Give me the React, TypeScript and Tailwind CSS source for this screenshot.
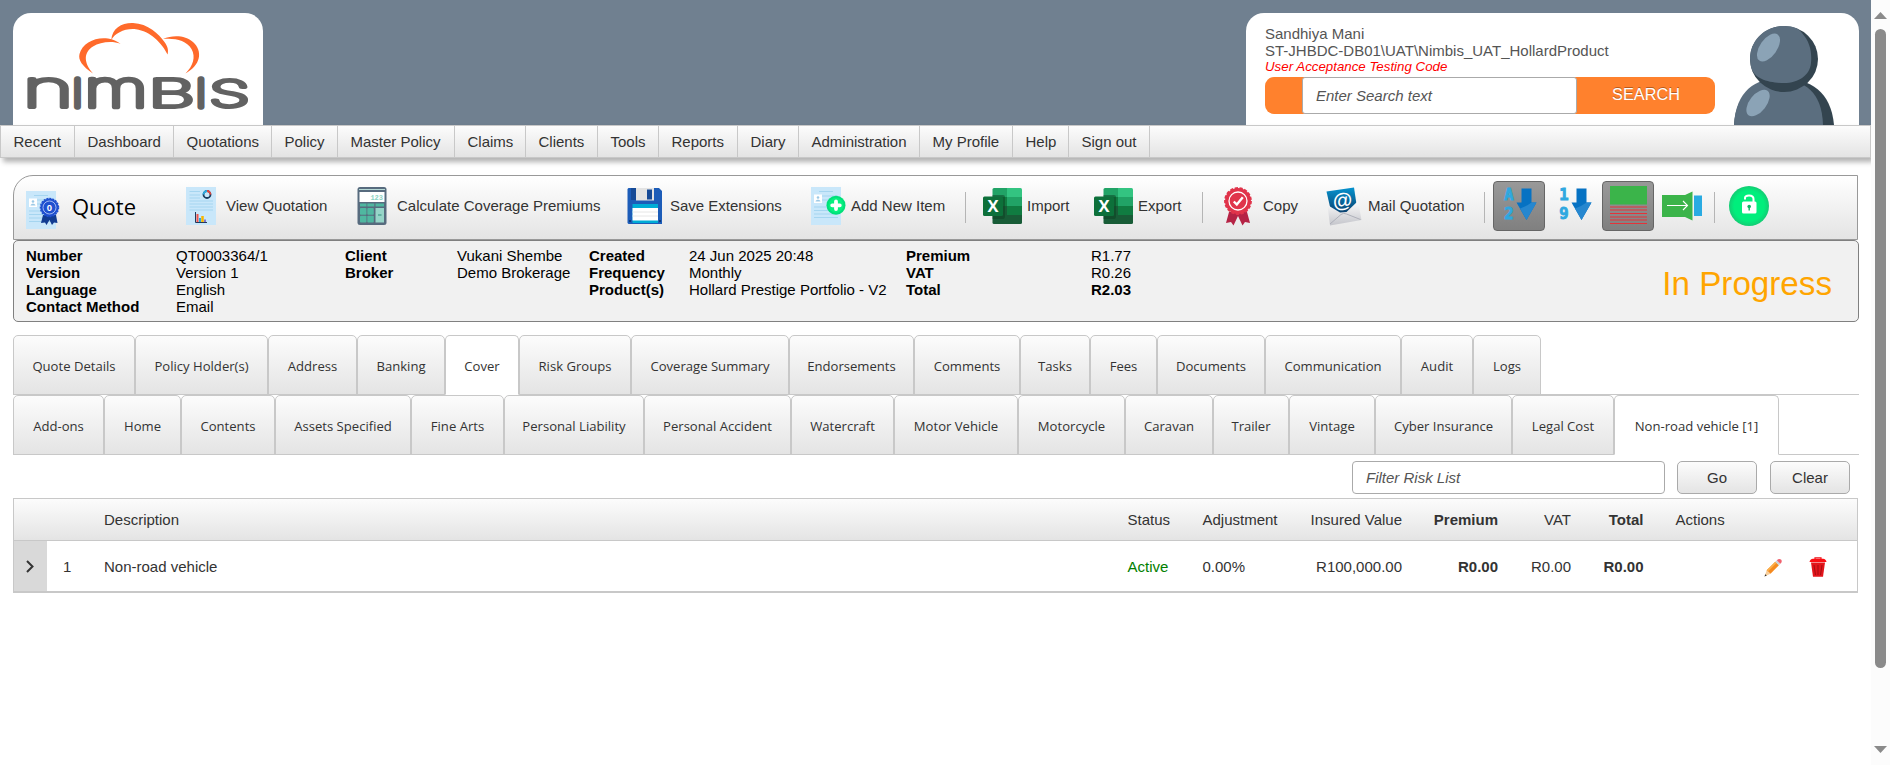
import React from "react";

const bar = "bg-gradient-to-b from-[#fcfcfc] to-[#e4e4e4]";

const wordmark = [
  { char: "n", x: 48, sx: 1.72, size: 51 },
  { char: "I", x: 77.5, sx: 1.1, size: 38 },
  { char: "m", x: 116, sx: 1.44, size: 51 },
  { char: "B", x: 171.5, sx: 1.92, size: 38 },
  { char: "I", x: 201, sx: 1.1, size: 38 },
  { char: "S", x: 229.500, sx: 1.78, size: 37 },
];

function Logo() {
  return (
    <svg width="250" height="112" viewBox="13 13 250 112" role="img" aria-label="NIMBIS">
      <g fill="#ff6a2b">
        <path d="M93 73.500C82 66 78 60 79.500 54C82 43 96 36.500 108 38.500C113 39.500 117 41 120.500 43.800C112 40.500 100 42 93 46.500C84 52 83 62 93 73.500Z" />
        <path d="M111.300 40C112 28 122 22.500 133 22.900C148 23.500 159 34 164.500 42C168 47 168.500 50 167.600 54.500C162 43 150 31 136 29.200C125 28 115 33 111.300 40Z" />
        <path d="M163 39C173 34.500 186 35.500 193 42C203 51 201 65 185.500 73.500C193 66 196 57 191.500 49C186 40 175 38 163 39Z" />
      </g>
      <g fill="#626262" stroke="#626262" strokeWidth="5.800" strokeLinejoin="round" fontFamily="Inter" fontWeight="100" textAnchor="middle">
        {wordmark.map(({ char, x, sx, size }) => (
          <text key={x} transform={`translate(${x} 107) scale(${sx} 1)`} fontSize={size} vectorEffect="non-scaling-stroke">
            {char}
          </text>
        ))}
      </g>
    </svg>
  );
}

function Avatar() {
  return (
    <svg width="100" height="100" viewBox="0 0 100 100">
      <path d="M0 100C2 66 24 54 50 54S97 66 100 100Z" fill="#33444f" />
      <path d="M0 100C2 62 26 52 48 54S88 66 89 100Z" fill="#5b6e7f" />
      <ellipse cx="50" cy="34" rx="34" ry="33" fill="#33444f" />
      <path d="M16 34C16 16 30 1 50 1C61 1 65 4 68 8C76 17 78 27 77 38C76 50 65 58 50 58C35 58 20 54 17 42Z" fill="#5b6e7f" />
      <ellipse cx="34.500" cy="22.500" rx="8.500" ry="16" transform="rotate(35 34.500 22.500)" fill="#8ba3b6" />
      <ellipse cx="24" cy="78" rx="8.500" ry="15.500" transform="rotate(38 24 78)" fill="#8ba3b6" />
    </svg>
  );
}

function Sheet() {
  return (
    <g>
      <rect width="30" height="38" fill="#c9e7fa" />
      <path d="M8 4.500H22M11 9H27M11 13H27M3 20H27M3 23.500H27M3 27H27M3 30.500H27" stroke="#a5d5f0" strokeWidth="1" />
      <rect x="3" y="7.500" width="8" height="8.500" fill="#fff" />
      <circle cx="7" cy="10.500" r="1.300" fill="#9cc9e6" />
      <path d="M4.500 14.500C4.800 12 9.200 12 9.500 14.500Z" fill="#9cc9e6" />
    </g>
  );
}

function QuoteIcon() {
  return (
    <svg width="34" height="38" viewBox="0 0 34 38">
      <Sheet />
      <path d="M17 24L15 32L19 31.500L20.500 34L23.500 29L26 34L28 31.500L31.500 32L30 24Z" fill="#123c92" />
      <circle cx="23.500" cy="16.500" r="9" fill="#1f50cf" stroke="#1f50cf" strokeWidth="1.500" strokeDasharray="2 1" />
      <circle cx="23.500" cy="16.500" r="6.500" fill="none" stroke="#d8e4ff" strokeWidth="0.700" />
      <text x="23.500" y="20" textAnchor="middle" fontSize="9.500" fontWeight="bold" fill="#fff" fontFamily="Liberation Sans">0</text>
    </svg>
  );
}

function ReportIcon() {
  return (
    <svg width="30" height="38" viewBox="0 0 30 38">
      <rect width="30" height="38" fill="#c9e7fa" />
      <path d="M3.500 4.500H14M3.500 8H14M3.500 11H14M3.500 14H27M3.500 17H27M3.500 20H27M3.500 23H27" stroke="#a5d5f0" strokeWidth="1.200" />
      <circle cx="21" cy="7.500" r="3.500" fill="none" stroke="#1b3a5b" strokeWidth="1.800" />
      <path d="M17.500 7.500A3.500 3.500 0 0 1 21 4" fill="none" stroke="#29abe2" strokeWidth="1.800" />
      <path d="M21 4A3.500 3.500 0 0 1 24.500 7.500" fill="none" stroke="#e8453c" strokeWidth="1.800" />
      <path d="M9.500 25V35.500H21" fill="none" stroke="#23395b" strokeWidth="1" />
      <path d="M11.500 27V35" stroke="#f0534a" strokeWidth="2" />
      <path d="M14 31V35" stroke="#29abe2" strokeWidth="2" />
      <path d="M16.500 29V35" stroke="#f7b500" strokeWidth="2.500" />
      <path d="M19 32.500V35" stroke="#6b4fbb" strokeWidth="1.500" />
    </svg>
  );
}

function CalculatorIcon() {
  const keys = [[3, 21], [10.3, 21], [3, 28.700], [10.3, 28.700]];
  return (
    <svg width="30" height="38" viewBox="0 0 30 38">
      <rect x="0.500" width="29" height="38" rx="2.500" fill="#576b7e" />
      <rect x="2" y="2" width="26" height="1" fill="#b7d9d6" />
      <rect x="2.500" y="5" width="25" height="10" fill="#fff" />
      <text x="26" y="13.300" textAnchor="end" fontSize="7" fontWeight="bold" fill="#8ad3c2" fontFamily="Liberation Mono">123</text>
      <path d="M3 16.500h6.500v3H3zM10.300 16.500h7v3h-7zM18.500 16.500h8.500v3h-8.500z" fill="#4fb7a0" />
      {keys.map(([x, y]) => (
        <rect key={`${x}-${y}`} x={x} y={y} width="6.500" height="6.800" rx="0.800" fill="#4fb7a0" />
      ))}
      <rect x="18.500" y="21" width="8.500" height="14.500" fill="#96d5c8" />
      <path d="M21 28H24.500" stroke="#4fa795" strokeWidth="1.500" />
    </svg>
  );
}

function FloppyIcon() {
  return (
    <svg width="36" height="36" viewBox="0 0 36 36">
      <path d="M1.500 0H32L35 3V36H1.500L0.500 35V1Z" fill="#1c5cb8" />
      <path d="M4 0H9V12H4z" fill="#164a96" />
      <path d="M9 0H27V12.500H9z" fill="#e3e3e3" />
      <path d="M20 1.500H25V11.500H20z" fill="#164a96" />
      <path d="M5.500 16H31V35H5.500z" fill="#00acd6" />
      <path d="M5.500 20H31V32.500H5.500z" fill="#fff" />
      <path d="M5.500 24H31M5.500 28H31" stroke="#e6e6e6" />
      <path d="M2 32h2v2H2zM32 32h2v2h-2z" fill="#0c3a7c" />
    </svg>
  );
}

function AddItemIcon() {
  return (
    <svg width="35" height="38" viewBox="0 0 35 38">
      <Sheet />
      <circle cx="25" cy="18.300" r="9.500" fill="#00e07a" />
      <circle cx="25" cy="18.300" r="7.500" fill="#06f07f" />
      <path d="M25 14.500V22.100M21.200 18.300H28.800" stroke="#fff" strokeWidth="3.800" strokeLinecap="round" />
    </svg>
  );
}

function ExcelIcon() {
  return (
    <svg width="39" height="36" viewBox="0 0 39 36">
      <path d="M11 0H24V9H9.500V1.500Q9.500 0 11 0Z" fill="#21a366" />
      <path d="M24 0H37.500Q39 0 39 1.500V9H24Z" fill="#33c481" />
      <path d="M9.500 9H24V18H9.500Z" fill="#107c41" />
      <path d="M24 9H39V18H24Z" fill="#21a366" />
      <path d="M9.500 18H24V27H9.500Z" fill="#185c37" />
      <path d="M24 18H39V27H24Z" fill="#107c41" />
      <path d="M9.500 27H39V34.500Q39 36 37.500 36H11Q9.500 36 9.500 34.500Z" fill="#185c37" />
      <path d="M9.500 7H20Q22 7 22 9V28Q22 31 20 31H9.500Z" fill="#0b3f22" opacity="0.500" />
      <rect y="8.500" width="20" height="19.500" rx="1.500" fill="#0d703a" />
      <text x="10" y="24.300" textAnchor="middle" fontSize="16.500" fontWeight="bold" fill="#fff" fontFamily="Open Sans">X</text>
    </svg>
  );
}

function RibbonIcon() {
  return (
    <svg width="28" height="39" viewBox="0 0 28 39">
      <path d="M5 25L2 36L7 35L9.500 38.500L14 29L18.500 38.500L21 35L26 36L23 25Z" fill="#b52345" />
      <circle cx="14" cy="14" r="13" fill="#e0344b" stroke="#e0344b" strokeWidth="1.800" strokeDasharray="3.200 1.600" />
      <circle cx="14" cy="14" r="9" fill="none" stroke="#fff" strokeWidth="1.300" />
      <path d="M9.800 14.500L12.800 17.500L18.800 10.300" fill="none" stroke="#fff" strokeWidth="2.400" />
    </svg>
  );
}

function MailIcon() {
  return (
    <svg width="36" height="39" viewBox="0 0 36 39">
      <defs>
        <linearGradient id="mailBlue" x1="0" y1="0" x2="0" y2="1">
          <stop offset="0" stopColor="#0593cf" />
          <stop offset="1" stopColor="#0c3763" />
        </linearGradient>
        <linearGradient id="mailPaper" x1="0" y1="0" x2="0" y2="1">
          <stop offset="0" stopColor="#fdfdfd" />
          <stop offset="1" stopColor="#c4c5cb" />
        </linearGradient>
      </defs>
      <path d="M0.500 4.500L28 0.500L31.500 24L18 29L4.500 22Z" fill="url(#mailBlue)" />
      <path d="M1.500 18L14 25.500L20.500 25L32 14L35.500 33L4 38.500Z" fill="url(#mailPaper)" />
      <text x="16.500" y="20" textAnchor="middle" fontSize="20" fontWeight="bold" fill="#fff" fontFamily="Liberation Sans" transform="rotate(-6 16.500 14)">@</text>
      <path d="M4 37L15 27.500Q17.500 25.500 20.500 27L34.500 32.500" fill="none" stroke="#a9abb5" strokeWidth="0.900" />
    </svg>
  );
}

function SortIcon({ top, bottom }: { top: string; bottom: string }) {
  return (
    <svg className="overflow-visible" width="33" height="34" viewBox="0 0 33 34">
      <g fill="#2fa8e0" stroke="#2fa8e0" strokeWidth="0.900" fontFamily="DejaVu Sans Mono" fontWeight="bold" fontSize="15.500" textAnchor="middle">
        <text x="5" y="13">{top}</text>
        <text x="5" y="32">{bottom}</text>
      </g>
      <path d="M17.500 1.500H27.500V15.500H32.500L22.500 33L12.500 15.500H17.500Z" fill="#0672c3" />
      <path d="M27.500 15.500H32.500L22.500 33L16 21.500Q23 19 27.500 15.500Z" fill="#2687cf" />
    </svg>
  );
}

function RowsIcon() {
  return (
    <svg width="37" height="39" viewBox="0 0 37 39">
      <rect y="0" width="37" height="18.500" fill="#3bb44a" />
      <path d="M0 21H37M0 24H37M0 27.500H37M0 31H37M0 34H37M0 37.500H37" stroke="#e63238" strokeWidth="1.100" />
    </svg>
  );
}

function ExpandIcon() {
  return (
    <svg width="40" height="30" viewBox="0 0 40 30">
      <path d="M0 4H23L30.500 0.500V29.500L23 26H0Z" fill="#3bb44a" />
      <rect x="32" y="4.500" width="8" height="20.500" fill="#29abe2" />
      <path d="M5 14.500H25M21 10L25.500 14.500L21 19" fill="none" stroke="#fff" strokeWidth="1.100" />
    </svg>
  );
}

function LockIcon() {
  return (
    <svg width="40" height="40" viewBox="0 0 40 40">
      <defs>
        <radialGradient id="lockGreen">
          <stop offset="0.750" stopColor="#00ee7c" />
          <stop offset="1" stopColor="#14cc74" />
        </radialGradient>
      </defs>
      <circle cx="20" cy="20" r="20" fill="url(#lockGreen)" />
      <rect x="13" y="15.500" width="14.500" height="12" rx="1.500" fill="#fff" />
      <path d="M16 13.500V12Q16 9.500 20 9.500Q24.500 9.500 24.500 13V16" fill="none" stroke="#fff" strokeWidth="2" />
      <circle cx="20.200" cy="20.500" r="1.800" fill="#0bb565" />
      <path d="M20.200 21V24.500" stroke="#0bb565" strokeWidth="1.400" />
    </svg>
  );
}

function PencilIcon() {
  return (
    <svg width="19" height="19" viewBox="0 0 19 19">
      <path d="M0.500 18.500L2.700 12.200L6.500 15.800Z" fill="#f7cf9c" />
      <path d="M0.500 18.500L1.300 16.300L2.800 17.600Z" fill="#333" />
      <path d="M2.700 12.200L11.300 3.700L14.900 7.300L6.500 15.800Z" fill="#f58a1f" />
      <path d="M2.700 12.200L11.300 3.700L12.500 5L4 13.500Z" fill="#fbb04c" />
      <path d="M11.300 3.700L12.800 2.200L16.400 5.800L14.900 7.300Z" fill="#c9d3da" />
      <path d="M12.800 2.200Q15 0.200 17 1.500Q18.800 3.500 16.400 5.800Z" fill="#f0616d" />
    </svg>
  );
}

function TrashIcon() {
  return (
    <svg width="18" height="20" viewBox="0 0 18 20">
      <path d="M6 2V0.800H12V2" fill="none" stroke="#f01218" strokeWidth="1.200" />
      <path d="M0.500 5Q1 2 4 1.800H14Q17 2 17.500 5Z" fill="#fb0d12" />
      <path d="M2 5.500H16L14 19.800H4Z" fill="#e3151b" />
      <path d="M5 8L6.500 18M9 8V18M13 8L11.500 18" stroke="#a50d12" strokeWidth="1" />
    </svg>
  );
}

const menu = [
  ["Recent", "w-[74px]"], ["Dashboard", "w-[99px]"], ["Quotations", "w-[98px]"], ["Policy", "w-[66px]"],
  ["Master Policy", "w-[117px]"], ["Claims", "w-[71px]"], ["Clients", "w-[72px]"], ["Tools", "w-[61px]"],
  ["Reports", "w-[79px]"], ["Diary", "w-[61px]"], ["Administration", "w-[121px]"], ["My Profile", "w-[93px]"],
  ["Help", "w-[56px]"], ["Sign out", "w-[81px]"],
];

const mainTabs = [
  ["Quote Details", "w-[122px]"], ["Policy Holder(s)", "w-[133px]"], ["Address", "w-[89px]"],
  ["Banking", "w-[88px]"], ["Cover", "w-[74px]"], ["Risk Groups", "w-[112px]"],
  ["Coverage Summary", "w-[158px]"], ["Endorsements", "w-[125px]"], ["Comments", "w-[106px]"],
  ["Tasks", "w-[70px]"], ["Fees", "w-[67px]"], ["Documents", "w-[108px]"],
  ["Communication", "w-[136px]"], ["Audit", "w-[72px]"], ["Logs", "w-[68px]"],
];

const coverTabs = [
  ["Add-ons", "w-[91px]"], ["Home", "w-[77px]"], ["Contents", "w-[94px]"], ["Assets Specified", "w-[136px]"],
  ["Fine Arts", "w-[93px]"], ["Personal Liability", "w-[140px]"], ["Personal Accident", "w-[147px]"],
  ["Watercraft", "w-[103px]"], ["Motor Vehicle", "w-[124px]"], ["Motorcycle", "w-[107px]"],
  ["Caravan", "w-[88px]"], ["Trailer", "w-[76px]"], ["Vintage", "w-[86px]"],
  ["Cyber Insurance", "w-[137px]"], ["Legal Cost", "w-[102px]"], ["Non-road vehicle [1]", "w-[165px]"],
];

function Tabs({ tabs, active }: { tabs: string[][]; active: string }) {
  return (
    <div className="flex h-[60px] w-[1846px] bg-[linear-gradient(#c8c8c8,#c8c8c8)] bg-[length:100%_1px] bg-bottom bg-no-repeat">
      {tabs.map(([name, width]) => (
        <button
          key={name}
          className={`${width} shrink-0 whitespace-nowrap rounded-t-[5px] border border-[#c8c8c8] pt-0.5 font-['Open_Sans',sans-serif] text-[13.100px] text-[#333] ${
            name === active ? "border-b-white bg-white" : bar
          }`}
        >
          {name}
        </button>
      ))}
    </div>
  );
}

const Divider = ({ className }: { className: string }) => (
  <span className={`${className} mt-0.5 h-[31px] w-px shrink-0 bg-[#b5b5b5]`} />
);

function Tool({ className, label, labelClass, children }: { className: string; label: string; labelClass: string; children: React.ReactNode }) {
  return (
    <button className={`${className} flex shrink-0 items-center whitespace-nowrap text-left`}>
      {children}
      <span className={`${labelClass} pb-0.5`}>{label}</span>
    </button>
  );
}

const cols = "grid grid-cols-[33px_57px_1023.500px_75px_88px_111.500px_96px_73px_72.500px_1fr] items-center";

export default function App() {
  return (
    <div className="flex h-[765px] w-[1890px] overflow-hidden bg-white font-['Liberation_Sans',Arial,sans-serif] text-[15px] leading-[17px] text-[#333]">
      <div className="flex w-[1871px] shrink-0 flex-col">
        <header className="flex h-[125px] justify-between bg-[#708090] pl-[13px] pr-3 pt-[13px]">
          <div className="w-[250px] overflow-hidden rounded-t-[18px] bg-white"><Logo /></div>
          <div className="flex w-[613px] justify-between rounded-t-[18px] bg-white pl-[19px] pr-[25px] pt-3 text-[#555]">
            <div className="flex w-[450px] flex-col">
              <div>Sandhiya Mani</div>
              <div>ST-JHBDC-DB01\UAT\Nimbis_UAT_HollardProduct</div>
              <div className="text-[13.300px] italic leading-[15px] text-[#f00]">User Acceptance Testing Code</div>
              <div className="mt-[3px] flex h-[37px] overflow-hidden rounded-[9px] bg-[#ff812d]">
                <input
                  className="ml-[37px] w-[275px] rounded-[3px] border border-[#aaa] bg-white px-[13px] italic placeholder:text-[#555]"
                  placeholder="Enter Search text"
                />
                <button className="flex-1 pb-[3px] text-[16.300px] text-white [text-shadow:0_-1px_0_rgba(0,0,0,0.3)]">SEARCH</button>
              </div>
            </div>
            <Avatar />
          </div>
        </header>

        <nav className={`flex h-[33px] shrink-0 border border-[#c8c8c8] shadow-[3px_4px_5px_rgba(0,0,0,0.3)] ${bar}`}>
          {menu.map(([name, width]) => (
            <a key={name} className={`${width} shrink-0 whitespace-nowrap border-r border-[#c8c8c8] pl-[12.500px] leading-[31px]`}>
              {name}
            </a>
          ))}
        </nav>

        <main className="pl-[13px] pt-[17px]">
          <div className="flex h-[65px] w-[1845px] items-center rounded-tl-[20px] border border-[#999] bg-gradient-to-b from-white to-[#e4e4e4] pb-[3px]">
            <span className="ml-3 mt-2"><QuoteIcon /></span>
            <span className="ml-3 w-[66px] font-['Open_Sans',sans-serif] text-[22px] text-black">Quote</span>
            <Tool className="ml-[48px]" label="View Quotation" labelClass="ml-2.5 w-[102px]"><ReportIcon /></Tool>
            <Tool className="ml-[29px]" label="Calculate Coverage Premiums" labelClass="ml-[10px] w-[203px]"><CalculatorIcon /></Tool>
            <Tool className="ml-[27px]" label="Save Extensions" labelClass="ml-[7px] w-[112px]"><FloppyIcon /></Tool>
            <Tool className="ml-[29px]" label="Add New Item" labelClass="ml-[5px] w-[95px]"><AddItemIcon /></Tool>
            <Divider className="ml-[19px]" />
            <Tool className="ml-[17px]" label="Import" labelClass="ml-[5px] w-[44px]"><ExcelIcon /></Tool>
            <Tool className="ml-[23px]" label="Export" labelClass="ml-[5px] w-[44px]"><ExcelIcon /></Tool>
            <Divider className="ml-[20px]" />
            <Tool className="ml-[21px]" label="Copy" labelClass="ml-[11px] w-[36px]"><RibbonIcon /></Tool>
            <Tool className="ml-[27px]" label="Mail Quotation" labelClass="ml-1.5 w-[99px]"><MailIcon /></Tool>
            <Divider className="ml-[17px]" />
            <button className="ml-[8px] flex h-[50px] w-[52px] shrink-0 items-center justify-center rounded-[4px] border border-[#666] bg-gradient-to-b from-[#999] to-[#808080] pb-1 pl-0.5">
              <SortIcon top="A" bottom="2" />
            </button>
            <button className="ml-[12px] flex h-[50px] w-[36px] shrink-0 items-center justify-center pb-1">
              <SortIcon top="1" bottom="9" />
            </button>
            <button className="ml-[9px] flex h-[50px] w-[52px] shrink-0 items-center justify-center rounded-[4px] border border-[#666] bg-gradient-to-b from-[#999] to-[#808080] pb-0.5">
              <RowsIcon />
            </button>
            <button className="ml-[8px] shrink-0"><ExpandIcon /></button>
            <Divider className="ml-[12px]" />
            <button className="ml-[14px] shrink-0"><LockIcon /></button>
          </div>

          <section className="flex h-[82px] w-[1846px] rounded-[5px] border border-[#808080] bg-[#f1f1f1] pl-3 pt-1.5 text-black">
            <div className="w-[150px] font-bold"><p>Number</p><p>Version</p><p>Language</p><p>Contact Method</p></div>
            <div className="w-[169px]"><p>QT0003364/1</p><p>Version 1</p><p>English</p><p>Email</p></div>
            <div className="w-[112px] font-bold"><p>Client</p><p>Broker</p></div>
            <div className="w-[132px]"><p>Vukani Shembe</p><p>Demo Brokerage</p></div>
            <div className="w-[100px] font-bold"><p>Created</p><p>Frequency</p><p>Product(s)</p></div>
            <div className="w-[217px]"><p>24 Jun 2025 20:48</p><p>Monthly</p><p>Hollard Prestige Portfolio - V2</p></div>
            <div className="w-[150px] font-bold"><p>Premium</p><p>VAT</p><p>Total</p></div>
            <div className="w-[75px] text-right"><p>R1.77</p><p>R0.26</p><p className="font-bold">R2.03</p></div>
            <div className="flex-1 pr-[26px] pt-[28px] text-right text-[33.200px] text-[orange]">In Progress</div>
          </section>

          <div className="mt-[13px]"><Tabs tabs={mainTabs} active="Cover" /></div>
          <Tabs tabs={coverTabs} active="Non-road vehicle [1]" />

          <div className="flex h-[43px] w-[1845px] justify-end pr-2 pt-[6px]">
            <input
              className="mr-[12px] h-[33px] w-[313px] rounded-[4px] border border-[#aaa] bg-white px-[13px] italic placeholder:text-[#555]"
              placeholder="Filter Risk List"
            />
            <button className={`mr-[13px] h-[33px] w-[80px] rounded-[5px] border border-[#aaa] ${bar}`}>Go</button>
            <button className={`h-[33px] w-[80px] rounded-[5px] border border-[#aaa] ${bar}`}>Clear</button>
          </div>

          <div className="w-[1845px] border border-b-2 border-[#c8c8c8]">
            <div className={`${cols} h-[42px] border-b border-[#c8c8c8] ${bar}`}>
              <span /><span /><span>Description</span><span>Status</span><span>Adjustment</span>
              <span className="text-right">Insured Value</span>
              <span className="text-right font-bold">Premium</span>
              <span className="text-right">VAT</span>
              <span className="text-right font-bold">Total</span>
              <span className="pl-8">Actions</span>
            </div>
            <div className={`${cols} h-[50px]`}>
              <span className="flex h-[50px] items-center justify-center bg-[#d9d9d9] pr-0.5">
                <svg width="8" height="13" viewBox="0 0 8 13" fill="none" stroke="#333" strokeWidth="2"><path d="M1 1L6.500 6.500L1 12" /></svg>
              </span>
              <span className="pl-4">1</span>
              <span>Non-road vehicle</span>
              <span className="text-[green]">Active</span>
              <span>0.00%</span>
              <span className="text-right">R100,000.00</span>
              <span className="text-right font-bold">R0.00</span>
              <span className="text-right">R0.00</span>
              <span className="text-right font-bold">R0.00</span>
              <span className="flex items-center gap-[26px] pl-[120px] pt-0.5"><PencilIcon /><TrashIcon /></span>
            </div>
          </div>
        </main>
      </div>

      <aside className="flex w-[19px] flex-col items-center justify-between bg-[#fcfcfc] pb-[12px] pt-[12px] text-[#8a8a8a]">
        <svg width="13" height="7" viewBox="0 0 13 7"><path d="M0 7L6.500 0L13 7Z" fill="currentColor" /></svg>
        <div className="mb-auto mt-[10px] h-[639px] w-[11px] rounded-full bg-[#8a8a8a]" />
        <svg width="13" height="7" viewBox="0 0 13 7"><path d="M0 0L6.500 7L13 0Z" fill="currentColor" /></svg>
      </aside>
    </div>
  );
}
